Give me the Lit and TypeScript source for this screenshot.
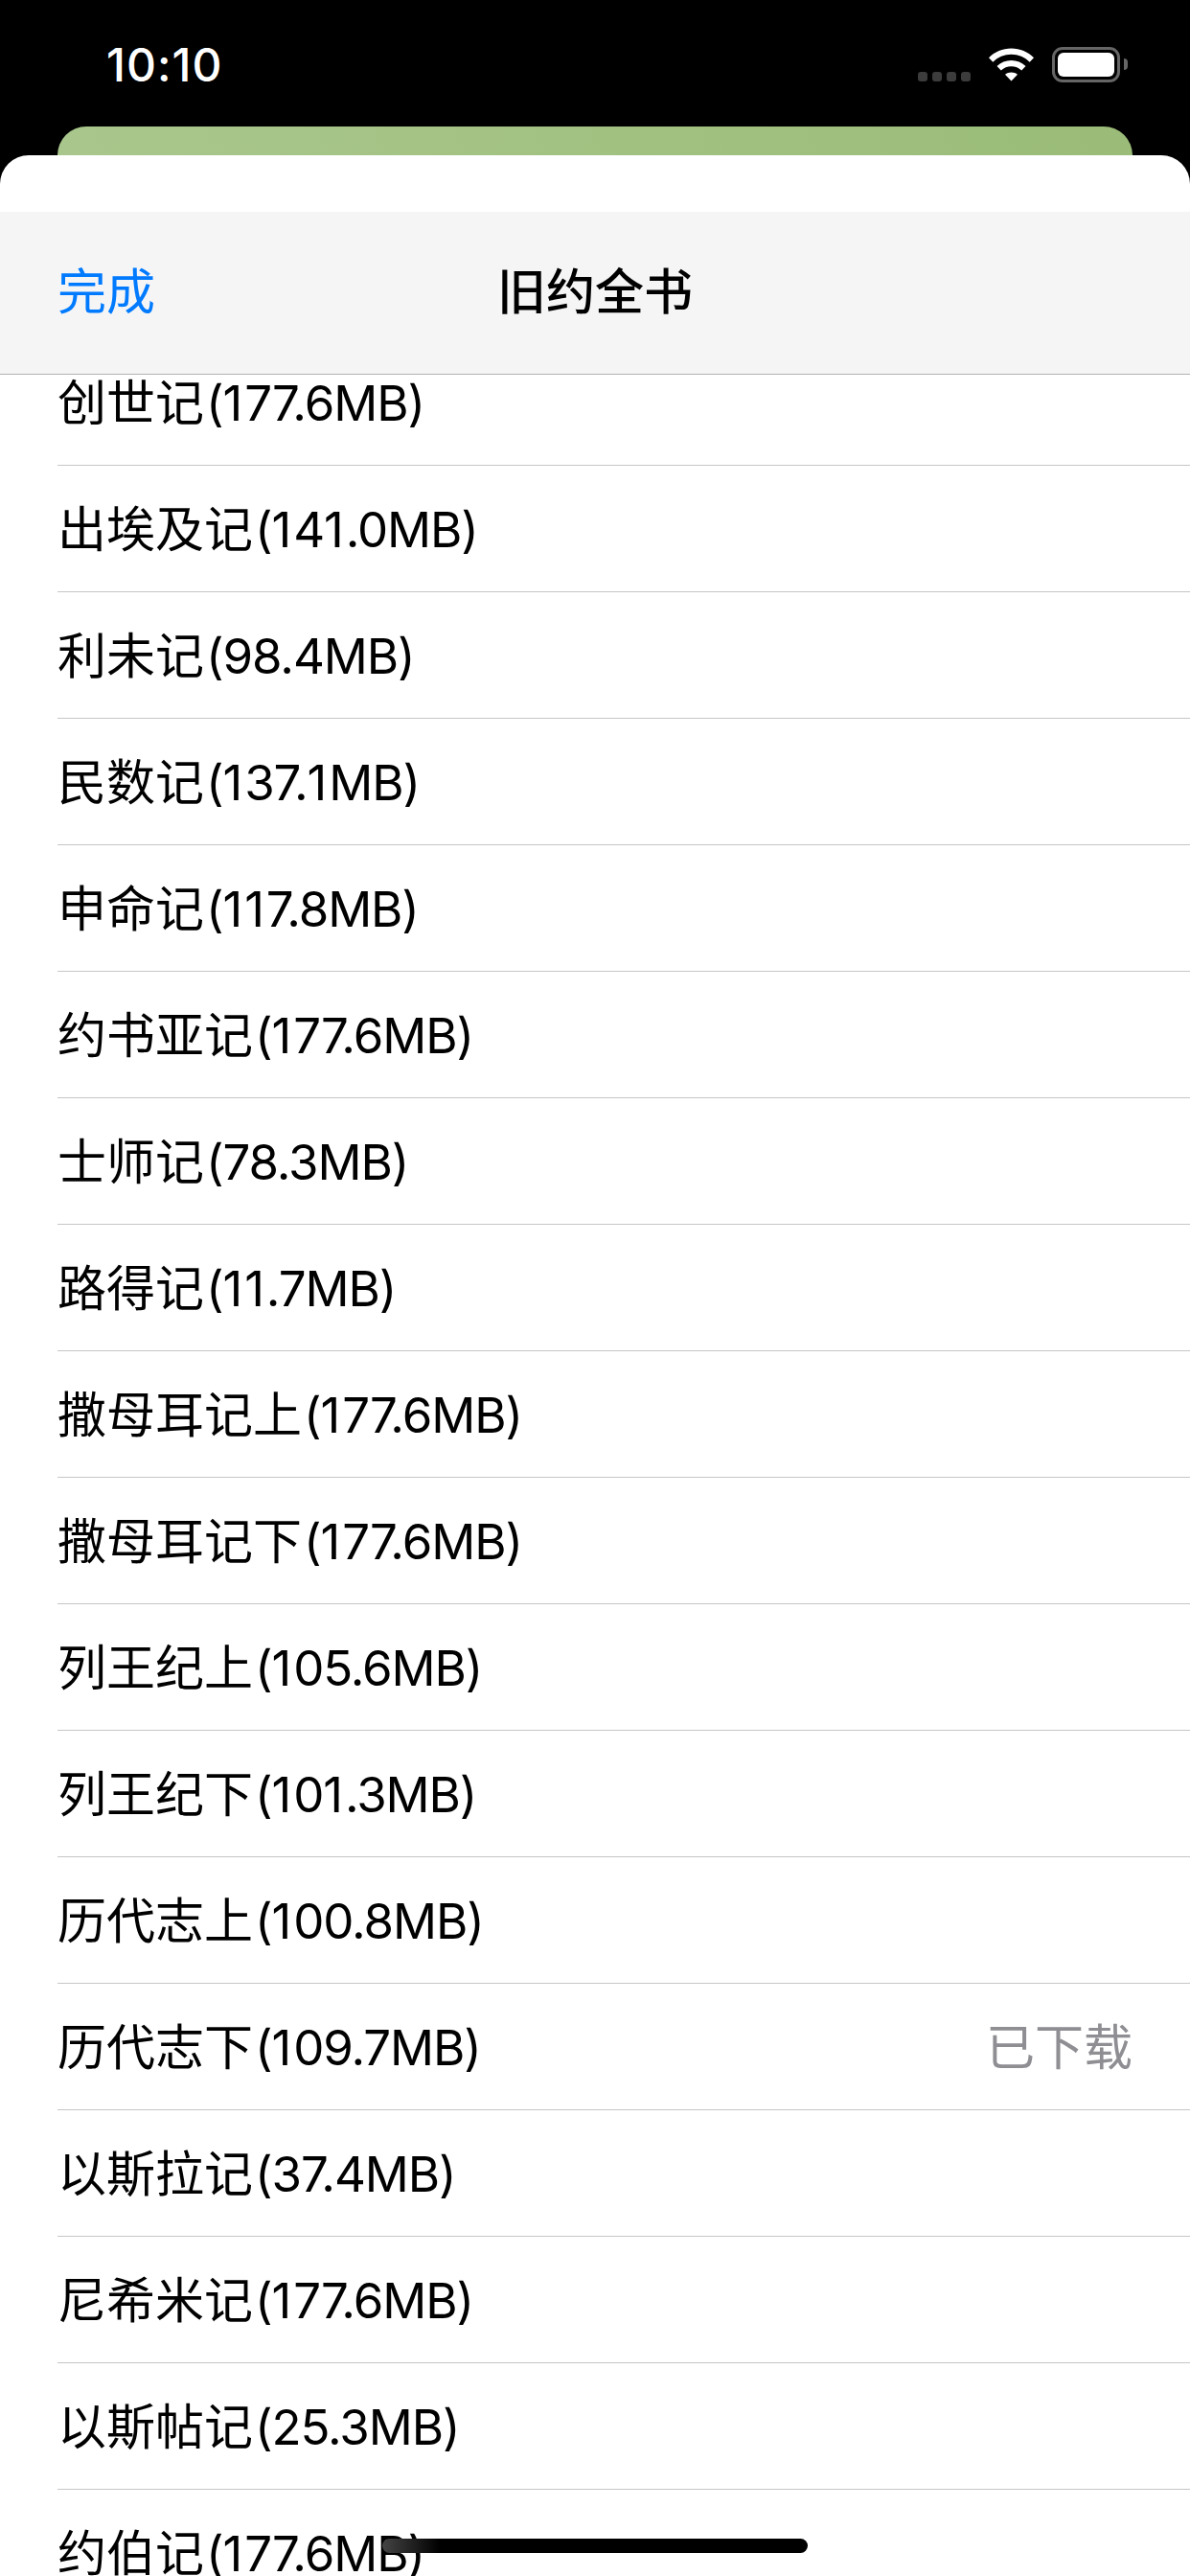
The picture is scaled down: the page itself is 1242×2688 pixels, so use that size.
import { LitElement, html, css, svg } from "lit";
import { customElement } from "lit/decorators.js";

const BOOKS: [string, string, string?][] = [
  ["创世记", "(177.6MB)"],
  ["出埃及记", "(141.0MB)"],
  ["利未记", "(98.4MB)"],
  ["民数记", "(137.1MB)"],
  ["申命记", "(117.8MB)"],
  ["约书亚记", "(177.6MB)"],
  ["士师记", "(78.3MB)"],
  ["路得记", "(11.7MB)"],
  ["撒母耳记上", "(177.6MB)"],
  ["撒母耳记下", "(177.6MB)"],
  ["列王纪上", "(105.6MB)"],
  ["列王纪下", "(101.3MB)"],
  ["历代志上", "(100.8MB)"],
  ["历代志下", "(109.7MB)", "已下载"],
  ["以斯拉记", "(37.4MB)"],
  ["尼希米记", "(177.6MB)"],
  ["以斯帖记", "(25.3MB)"],
  ["约伯记", "(177.6MB)"],
];

const wifi = svg`<path d="M0 11.2C6.2 5 14.4 1.5 23.5 1.5S40.800 5 47 11.200L42.700 15.700C37.500 10.800 30.900 7.800 23.500 7.800S9.500 10.800 4.300 15.700Z"/><path d="M8.500 20C12.500 16.300 17.700 14 23.500 14S34.500 16.300 38.500 20L34.200 24.400C31.300 21.900 27.600 20.300 23.500 20.300S15.700 21.900 12.800 24.400Z"/><path d="M17 28.700C18.800 27.300 21 26.400 23.500 26.400S28.200 27.300 30 28.700L23.500 35.500Z"/>`;

@customElement("app-root")
export class AppRoot extends LitElement {
  static styles = css`
    :host {
      display: block;
      width: 1242px;
      height: 2688px;
      overflow: hidden;
      position: relative;
      background: #000;
      font-family: Inter, "Noto Sans CJK SC", sans-serif;
      color: #000;
    }
    .status {
      height: 132px;
      box-sizing: border-box;
      display: flex;
      align-items: flex-start;
      padding: 42px 73px 0 111px;
    }
    .time {
      color: #fff;
      font-size: 48px;
      line-height: 52px;
      font-weight: 500;
      letter-spacing: 1px;
      flex: 1;
    }
    .dots {
      display: flex;
      gap: 5px;
      margin: 33px 19px 0 0;
    }
    .dots i {
      width: 10px;
      height: 10px;
      border-radius: 3px;
      background: #3c3c3c;
    }
    .wifi {
      width: 47px;
      height: 36px;
      margin: 7px 19px 0 0;
      fill: #fff;
    }
    .battery {
      width: 71px;
      height: 37px;
      margin-top: 7px;
      box-sizing: border-box;
      border: 3px solid #666;
      border-radius: 11px;
      padding: 3px;
      display: flex;
      position: relative;
    }
    .battery b {
      flex: 1;
      background: #fff;
      border-radius: 6px;
    }
    .battery::after {
      content: "";
      position: absolute;
      right: -11px;
      top: 9px;
      width: 4px;
      height: 12px;
      background: #666;
      border-radius: 0 6px 6px 0;
    }
    .card {
      height: 30px;
      margin: 0 60px;
      border-radius: 30px 30px 0 0;
      background: linear-gradient(90deg, #a9c78c, #9abc78);
    }
    .sheet {
      height: 2526px;
      background: #fff;
      border-radius: 30px 30px 0 0;
      padding-top: 59px;
      box-sizing: border-box;
      display: flex;
      flex-direction: column;
      overflow: hidden;
    }
    .nav {
      flex: none;
      height: 170px;
      box-sizing: border-box;
      background: #f5f5f6;
      border-bottom: 1px solid #b2b2b2;
      display: grid;
      grid-template-columns: 1fr auto 1fr;
      align-items: center;
      padding: 0 60px 10px;
      font-size: 51px;
    }
    .done {
      color: #007aff;
    }
    .title {
      font-weight: 500;
    }
    .viewport {
      flex: 1;
      overflow: hidden;
    }
    .list {
      margin-top: -37px;
    }
    .row {
      height: 132px;
      box-sizing: border-box;
      margin-left: 60px;
      padding: 0 60px 5px 0;
      border-bottom: 1px solid #c6c6c8;
      display: flex;
      align-items: center;
      justify-content: space-between;
      font-size: 51px;
      white-space: nowrap;
    }
    .size {
      letter-spacing: -1.1px;
      margin-left: 2px;
    }
    .one {
      letter-spacing: 1.9px;
    }
    .state {
      color: #8e8e93;
    }
    .home {
      position: absolute;
      left: 399px;
      top: 2649px;
      width: 444px;
      height: 15px;
      border-radius: 8px;
      background: linear-gradient(90deg, #444 0, #000 60px);
    }
  `;

  private sizeText(size: string) {
    return size
      .split(/(1)/)
      .map((part) => (part === "1" ? html`<span class="one">1</span>` : part));
  }

  render() {
    return html`
      <div class="status">
        <span class="time">10:10</span>
        <span class="dots"><i></i><i></i><i></i><i></i></span>
        <svg class="wifi" viewBox="0 0 47 36">${wifi}</svg>
        <span class="battery"><b></b></span>
      </div>
      <div class="card"></div>
      <div class="sheet">
        <div class="nav">
          <span class="done">完成</span>
          <span class="title">旧约全书</span>
        </div>
        <div class="viewport">
          <div class="list">
            ${BOOKS.map(
              ([name, size, state]) => html`<div class="row">
                <span>${name}<span class="size">${this.sizeText(size)}</span></span>
                ${state ? html`<span class="state">${state}</span>` : ""}
              </div>`
            )}
          </div>
        </div>
      </div>
      <div class="home"></div>
    `;
  }
}
